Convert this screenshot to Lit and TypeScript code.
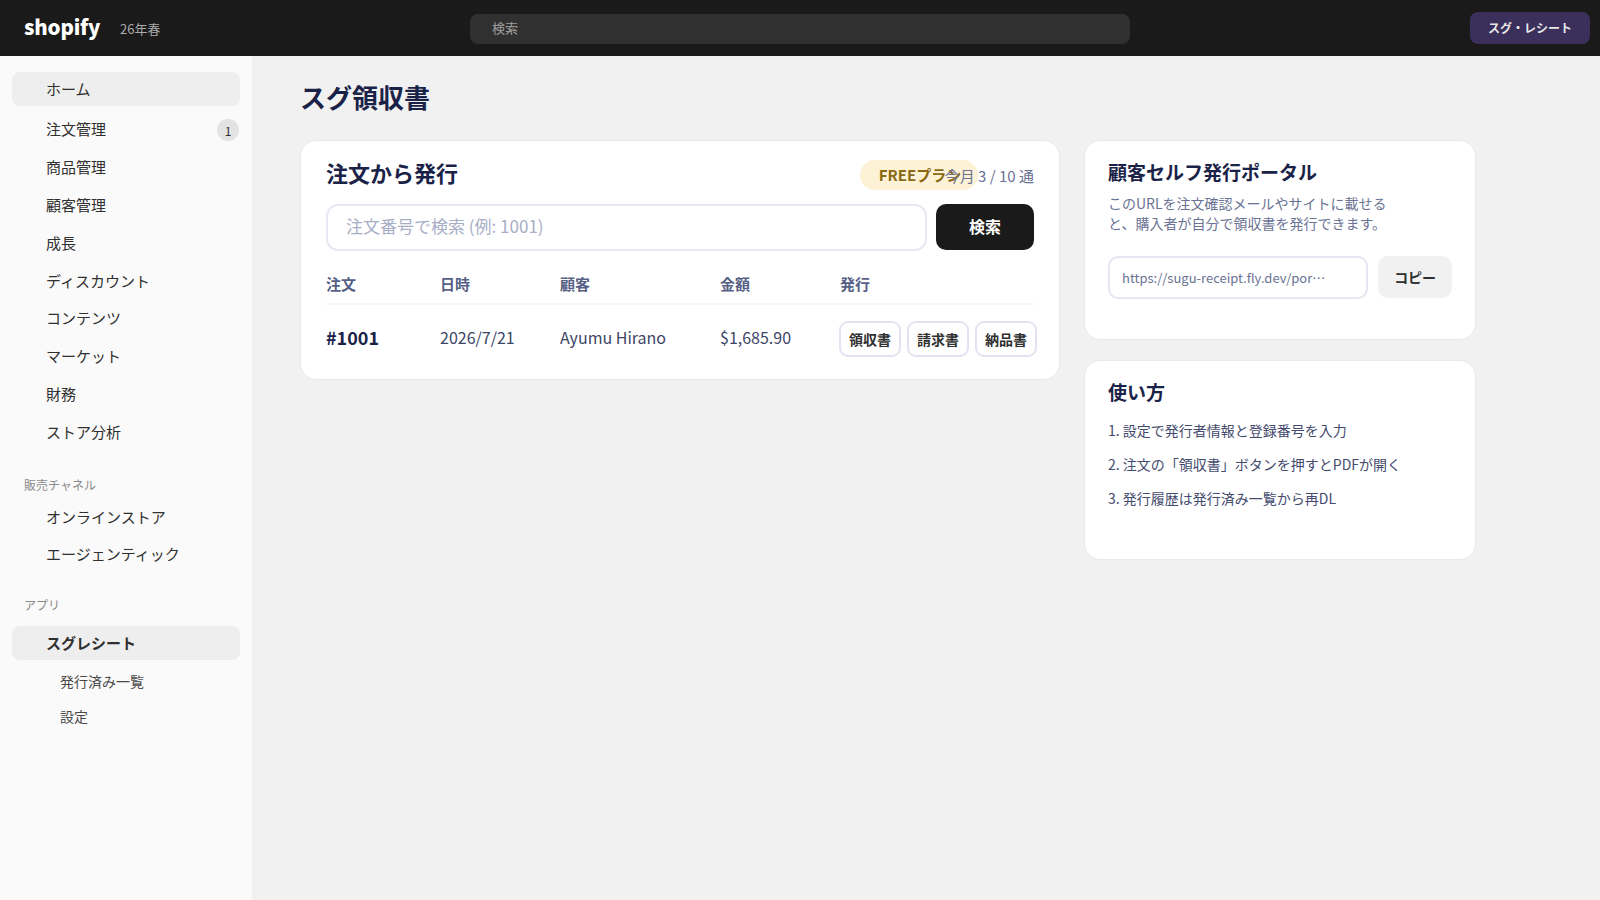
import { LitElement, html, css } from "lit";
import { customElement } from "lit/decorators.js";

const NAV = ["注文管理", "商品管理", "顧客管理", "成長", "ディスカウント", "コンテンツ", "マーケット", "財務", "ストア分析"];

@customElement("app-root")
export class AppRoot extends LitElement {
  static styles = css`
    :host { display: block; width: 1600px; height: 900px; overflow: hidden; background: #f1f1f1; font-family: "Noto Sans CJK JP", sans-serif; color: #303030; }
    * { box-sizing: border-box; }
    .top { height: 56px; background: #1a1a1a; display: flex; align-items: center; padding: 0 10px 0 24px; position: relative; }
    .logo { color: #fff; font-weight: 900; font-size: 20.5px; line-height: 30px; width: 96px; margin-top: -5px; letter-spacing: -0.2px; }
    .season { color: #aaa; font-size: 13px; margin-top: 1px; }
    .search { position: absolute; left: 470px; top: 14px; width: 660px; height: 30px; background: #303030; border-radius: 8px; color: #a0a0a0; font-size: 13px; line-height: 28px; padding-left: 22px; }
    .shop-btn { margin-left: auto; width: 120px; height: 32px; border-radius: 8px; background: #3b2f5c; color: #e8e8e8; font-size: 12px; font-weight: 700; display: flex; align-items: center; justify-content: center; padding-bottom: 2px; }
    .body { display: flex; height: 844px; }
    .side { width: 252px; flex: none; background: #fafafa; padding: 16px 12px; }
    .item { height: 34px; display: flex; align-items: center; padding: 0 0 2px 34px; font-size: 15px; color: #303030; margin-bottom: 3.95px; }
    .item.active { background: #eeeeee; border-radius: 8px; }
    .item.home { margin-bottom: 6.3px; }
    .item.strong { font-weight: 700; margin-bottom: 6.6px; padding-bottom: 1px; }
    .count { margin-left: auto; margin-right: 1px; margin-top: 4px; width: 22px; height: 22px; border-radius: 50%; background: #e3e3e3; font-size: 12px; display: flex; align-items: center; justify-content: center; }
    .label { font-size: 12px; color: #8a8a8a; padding-left: 12px; line-height: 18px; }
    .label.a { margin-top: 26.15px; margin-bottom: 8px; }
    .label.b { margin-top: 25.7px; margin-bottom: 12px; }
    .item.channel { height: 32px; margin-bottom: 4.3px; }
    .item.sub { height: 31px; margin-bottom: 3.5px; padding-left: 48px; font-size: 14px; color: #4a4a4a; }
    .main { flex: 1; padding: 21px 0 0 48px; }
    h1 { margin: 0 0 23px; font-size: 26px; line-height: 40px; font-weight: 700; color: #1a2347; }
    .cols { display: flex; gap: 24px; align-items: flex-start; }
    .card { background: #fff; border: 1px solid #e9e9eb; border-radius: 16px; }
    .orders { width: 760px; height: 240px; padding: 14px 25px; }
    .head { display: flex; align-items: center; height: 34px; margin-bottom: 14.5px; }
    h2 { margin: 0; font-size: 22px; line-height: 34px; font-weight: 700; color: #1a2347; }
    .plan { margin-left: auto; margin-top: 6px; display: flex; align-items: center; }
    .pill { width: 118.6px; height: 30px; border-radius: 15px; background: #fdf2d6; color: #8a6a14; font-size: 15px; font-weight: 700; line-height: 30px; padding-left: 19px; white-space: nowrap; }
    .usage { margin-left: -33.6px; font-size: 15px; color: #6b7394; white-space: nowrap; position: relative; }
    .find { display: flex; gap: 9px; height: 47px; align-items: center; }
    .find .field { width: 601px; height: 47px; border: 2px solid #e6e9f3; border-radius: 12px; padding: 0 18px 4px; font: 17px "Noto Sans CJK JP", sans-serif; outline: none; }
    .field::placeholder { color: #a8aec6; opacity: 1; }
    .go { flex: 1; height: 46px; border: 0; border-radius: 10px; background: #1a1a1a; color: #fff; font: 700 16px "Noto Sans CJK JP", sans-serif; padding: 0 0 3px; }
    .grid { display: grid; grid-template-columns: 114px 120px 160px 120px 1fr; align-items: center; }
    .th { height: 38px; margin-top: 16.5px; border-bottom: 2px solid #f6f7fb; font-size: 15px; font-weight: 700; color: #565f85; padding-bottom: 4px; }
    .td { height: 64px; font-size: 16px; color: #3d4566; }
    .num { font-size: 18px; font-weight: 700; color: #1a2347; }
    .acts { display: flex; gap: 6.7px; width: 200px; margin: 4px 0 0 -0.7px; }
    .doc { width: 61.3px; height: 35.4px; border: 2px solid #e2e5f1; background: #fff; border-radius: 9px; font: 700 14px "Noto Sans CJK JP", sans-serif; color: #303030; padding: 0; }
    .aside { width: 392px; display: flex; flex-direction: column; gap: 20px; }
    .aside .card { height: 200px; padding: 14px 23px; }
    h3 { margin: 0; font-size: 19px; line-height: 34px; font-weight: 700; color: #1a2347; }
    .desc { margin: 4px 0 0; width: 285px; font-size: 14px; line-height: 20.3px; color: #6b7394; }
    .url { display: flex; gap: 10px; margin-top: 22.4px; }
    .url .addr { width: 261px; height: 43px; border: 2px solid #e4e7f2; border-radius: 10px; padding: 0 38px 0 12px; font: 13px "Noto Sans CJK JP", sans-serif; color: #6b7394; text-overflow: ellipsis; outline: none; }
    .copy { width: 74px; height: 42px; border: 0; border-radius: 10px; background: #f1f1f1; font: 700 14px "Noto Sans CJK JP", sans-serif; color: #303030; padding: 0; }
    ol { list-style: none; margin: 4px 0 0; padding: 0; font-size: 14px; color: #444b6e; }
    li { height: 34px; line-height: 34px; }
  `;

  render() {
    return html`
      <header class="top">
        <div class="logo">shopify</div>
        <div class="season">26年春</div>
        <div class="search">検索</div>
        <div class="shop-btn">スグ・レシート</div>
      </header>
      <div class="body">
        <nav class="side">
          <div class="item active home">ホーム</div>
          ${NAV.map((n, i) => html`<div class="item">${n}${i === 0 ? html`<span class="count">1</span>` : ""}</div>`)}
          <div class="label a">販売チャネル</div>
          <div class="item channel">オンラインストア</div>
          <div class="item channel">エージェンティック</div>
          <div class="label b">アプリ</div>
          <div class="item active strong">スグレシート</div>
          <div class="item sub">発行済み一覧</div>
          <div class="item sub">設定</div>
        </nav>
        <main class="main">
          <h1>スグ領収書</h1>
          <div class="cols">
            <section class="card orders">
              <div class="head">
                <h2>注文から発行</h2>
                <div class="plan"><span class="pill">FREEプラン</span><span class="usage">今月 3 / 10 通</span></div>
              </div>
              <div class="find">
                <input class="field" placeholder="注文番号で検索 (例: 1001)" />
                <button class="go">検索</button>
              </div>
              <div class="grid th"><span>注文</span><span>日時</span><span>顧客</span><span>金額</span><span>発行</span></div>
              <div class="grid td">
                <span class="num">#1001</span><span>2026/7/21</span><span>Ayumu Hirano</span><span>$1,685.90</span>
                <span class="acts"><button class="doc">領収書</button><button class="doc">請求書</button><button class="doc">納品書</button></span>
              </div>
            </section>
            <div class="aside">
              <section class="card">
                <h3>顧客セルフ発行ポータル</h3>
                <p class="desc">このURLを注文確認メールやサイトに載せると、購入者が自分で領収書を発行できます。</p>
                <div class="url">
                  <input class="addr" readonly value="https://sugu-receipt.fly.dev/portal/ayumu-hirano" />
                  <button class="copy">コピー</button>
                </div>
              </section>
              <section class="card">
                <h3>使い方</h3>
                <ol>
                  <li>1. 設定で発行者情報と登録番号を入力</li>
                  <li>2. 注文の「領収書」ボタンを押すとPDFが開く</li>
                  <li>3. 発行履歴は発行済み一覧から再DL</li>
                </ol>
              </section>
            </div>
          </div>
        </main>
      </div>
    `;
  }
}
